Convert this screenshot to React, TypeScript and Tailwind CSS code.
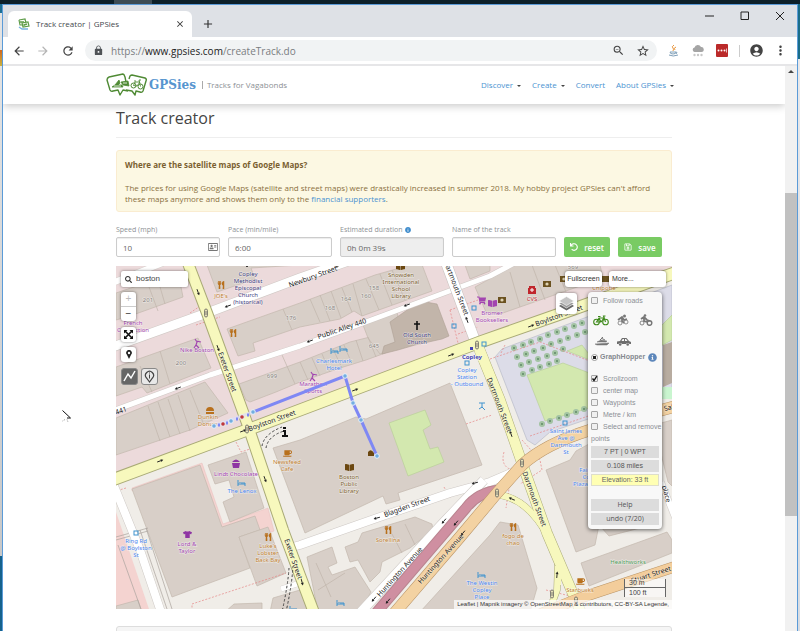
import React from "react";
import {
  MdArrowBack,
  MdArrowForward,
  MdRefresh,
  MdLock,
  MdZoomOut,
  MdStarBorder,
  MdAccountCircle,
  MdMoreVert,
  MdClose,
  MdAdd,
} from "react-icons/md";
import {
  FaInfoCircle,
  FaUndo,
  FaRegSave,
  FaSearch,
  FaUtensils,
  FaTshirt,
  FaCoffee,
  FaShoppingCart,
  FaBookOpen,
  FaRegAddressCard,
} from "react-icons/fa";

const ORANGE = "#c0802f";
const NAVY = "#40407f";
const BROWN = "#7d6230";
const PURPLE = "#a245b0";
const BLUE = "#4a84ee";
const GREY = "#85807a";

function Label({
  x,
  y,
  lines,
  color,
  size = 6,
  bold = false,
}: {
  x: number;
  y: number;
  lines: string[];
  color: string;
  size?: number;
  bold?: boolean;
}) {
  return (
    <g
      fill={color}
      fontSize={size}
      textAnchor="middle"
      fontWeight={bold ? 700 : 400}
      stroke="#ffffff"
      strokeOpacity={0.55}
      strokeWidth={1}
      paintOrder="stroke"
    >
      {lines.map((line, i) => (
        <text key={line} x={x} y={y + i * 7}>
          {line}
        </text>
      ))}
    </g>
  );
}

function Street({ x, y, r, children }: { x: number; y: number; r: number; children: string }) {
  return (
    <text
      transform={`translate(${x} ${y}) rotate(${r})`}
      y={2}
      fontSize={7}
      textAnchor="middle"
      fill="#222"
      stroke="#fff"
      strokeOpacity={0.4}
      strokeWidth={1}
      paintOrder="stroke"
    >
      {children}
    </text>
  );
}

function Road({ d, color, casing, width }: { d: string; color: string; casing: string; width: number }) {
  return (
    <g fill="none" strokeLinejoin="round">
      <path d={d} stroke={casing} strokeWidth={width + 1} />
      <path d={d} stroke={color} strokeWidth={width} />
    </g>
  );
}

function Bed({ x, y }: { x: number; y: number }) {
  return (
    <path
      d={`M${x},${y} v6 M${x},${y + 4} h7 M${x + 7},${y + 6} v-3 h-4 M${x + 2},${y + 2} v1`}
      fill="none"
      stroke="#3f93cf"
      strokeWidth="1"
    />
  );
}

const arrows = [
  [198, 292, 70], [218, 348, 70], [228, 306, 160], [178, 388, 160], [160, 461, -20], [243, 431, -20],
  [265, 479, 70], [338, 266, 160], [407, 305, 160], [310, 341, 160], [467, 320, -110], [451, 355, -20],
  [355, 390, -20], [531, 326, -20], [511, 434, -110], [512, 499, 205], [557, 575, -85], [377, 518, 165],
  [475, 483, 165], [444, 521, 130], [456, 523, 130], [463, 533, 130], [374, 599, 130], [388, 601, 130],
  [302, 582, 75],
];

const trees = [
  [514, 348], [523, 345], [531, 342], [540, 339], [548, 335], [557, 332], [565, 329], [574, 326], [582, 323],
  [517, 357], [526, 354], [534, 351], [543, 348], [551, 344], [560, 341], [568, 338], [577, 335], [585, 332],
  [521, 365], [529, 362], [538, 359], [547, 356], [555, 353], [563, 349],
  [523, 374], [532, 370], [540, 367], [549, 364], [557, 361],
  [542, 424], [550, 421], [559, 418], [567, 415], [576, 412], [584, 409],
];

const buildings = [
  "116,293 178,272 183,297 130,316 116,320",
  "207,265 217,292 255,279 251,268 300,265",
  "227,329 238,356 255,351 253,343 300,327 340,319 354,311 362,316 432,291 421,262 375,275 300,303",
  "116,367 198,338 211,368 147,393 142,387 116,396",
  "239,384 300,362 350,342 378,335 388,352 366,360 340,368 300,382 276,392 250,402 246,400",
  "116,418 205,382 228,413 190,430 116,455",
  "363,325 397,312 404,345 380,354 368,338",
  "465,265 490,265 490,271 470,279",
  "475,287 515,265 600,265 603,278 500,314 486,312",
  "273,448 300,440 356,417 366,419 450,383 482,465 398,493 400,500 386,504 383,496 305,533",
  "208,465 246,452 264,508 230,522 223,502 234,497 229,480 215,484",
  "132,489 200,465 222,527 255,516 260,530 239,537 250,568 172,597",
  "239,537 268,527 286,573 257,586",
  "116,606 138,600 142,612 116,612",
  "307,557 332,547 337,563 328,567 332,575 355,567 371,592 360,612 318,612",
  "345,547 358,542 362,533 415,517 432,524 433,530 410,548 382,562 380,572 370,582 358,560 350,562",
  "420,612 490,535 500,522 518,525 537,588 530,612",
  "546,470 570,460 576,451 600,438 600,520 595,545 576,552",
  "581,563 667,532 672,540 672,553 589,586",
  "600,526 640,520 648,526 609,536",
  "654,425 672,420 672,486 668,482",
  "234,604 262,603 262,612 225,612",
  "273,598 300,590 312,612 270,612",
];

const walls =
  "M158,280 165,304 M149,287 158,311 M140,366 152,392 M160,351 170,384 M148,406 160,441 M158,402 170,437 M168,399 180,434 M178,395 190,431 M190,390 204,425 M283,309 292,330 M310,299 320,322 M320,295 330,321 M331,291 341,318 M342,288 352,312 M353,284 362,316 M366,279 379,310 M380,274 392,305 M392,270 405,300 M300,362 308,380 M312,358 320,376 M322,354 330,372 M333,349 342,368 M344,345 352,364 M356,340 363,361 M368,337 376,357 M510,272 520,307 M532,265 545,300 M555,265 566,292 M282,355 295,384 M316,563 331,597 M392,534 402,553 M405,524 415,545 M318,590 345,573";

function StreetMap() {
  return (
    <svg
      className="block h-full w-full"
      viewBox="116 266 556 343"
      preserveAspectRatio="xMidYMid slice"
      fontFamily="'Noto Sans','Open Sans',sans-serif"
      role="img"
      aria-label="Map of Back Bay, Boston"
    >
      <rect x="100" y="250" width="600" height="380" fill="#f0ede8" />
      <polygon points="116,250 672,250 672,274 480,342 116,478" fill="#ecdadb" />
      <polygon points="495,357 502,349 672,285 672,395 600,415 550,432 535,445 527,440" fill="#dcdce8" stroke="#b9bbc8" strokeWidth="0.7" />
      <polygon points="116,512 150,612 116,612" fill="#f4d3d0" />
      <path d="M132,488 L202,463 223,524 268,508 274,531 262,536 255,518 221,529 199,467 132,491z" fill="#f4d3d0" stroke="#e5b8b5" strokeWidth="0.4" />
      <g fill="#d8cfc8" stroke="#c3b8ad" strokeWidth="0.7">
        {buildings.map((points) => (
          <polygon key={points} points={points} />
        ))}
      </g>
      <path d={walls} fill="none" stroke="#c0b5aa" strokeWidth="0.7" />
      <polygon points="390,322 420,301 437,304 449,336 442,339 415,345 398,350 382,354 384,346 395,342" fill="#c2b5aa" stroke="#ac9f93" strokeWidth="0.6" />
      <polygon points="663,345 672,342 672,383 663,387" fill="#b8aca0" />
      <g fill="#d3e8af" stroke="#b5cd94" strokeWidth="0.6">
        <polygon points="389,423 425,410 431,425 423,430 430,449 438,447 444,462 408,476" />
        <polygon points="527,375 563,363 600,377 600,405 545,421" />
        <polygon points="567,351 582,345 595,362" />
        <polygon points="657,330 672,315 672,340 657,348" />
      </g>
      <rect x="655" y="387" width="17" height="12" fill="#c9f5cf" />
      {trees.map(([x, y]) => (
        <g key={`${x}-${y}`}>
          <circle cx={x} cy={y} r="3" fill="#a3c3a3" />
          <circle cx={x} cy={y} r="1" fill="#5f8a66" />
        </g>
      ))}

      <path d="M116,537 L148,528 M116,540 L148,531 M140,530 167,609 M146,528 172,609 M118,545 142,612" stroke="#aaa49e" strokeWidth="0.7" fill="none" />
      <g fill="none" stroke="#e58585" strokeWidth="0.7" strokeDasharray="2 1.5">
        <path d="M450,310 458,343 M450,310 478,300 M458,334 478,327 M490,359 540,342 600,365 M192,611 192,604 286,573 M466,424 492,415 M236,442 241,452 250,449 M126,488 116,491 M504,452 Q500,466 512,470 L506,508 M522,440 540,460 542,470 520,484 M546,590 570,596 M190,313 203,304 M196,325 220,317 M505,345 501,353" />
        <path d="M530,436 600,412 M444,487 450,498" />
      </g>

      <Road d="M110,284 L165,262" color="#fff" casing="#d5cfcb" width={6} />
      <Road d="M110,348 L207,313 300,278 360,257" color="#fff" casing="#cfc8c4" width={9} />
      <Road d="M110,412 L210,375 300,346 363,323 490,276 520,260" color="#fff" casing="#cfc8c4" width={5} />
      <Road d="M445,260 L477,346" color="#fff" casing="#c5c0bc" width={10} />
      <Road d="M114,486 L140,550 162,615" color="#fff" casing="#cfcac6" width={8} />
      <Road d="M285,549 L300,545 377,518 450,493 490,482 520,469" color="#fff" casing="#cfcac6" width={8} />
      <Road d="M281,589 L300,583" color="#fff" casing="#cfcac6" width={5} />
      <Road d="M358,615 L443,523 484,480" color="#fff" casing="#cfcac6" width={9} />
      <Road d="M661,482 L678,525" color="#fff" casing="#cfcac6" width={6} />
      <path d="M376,613 L466,508 Q478,492 500,490" fill="none" stroke="#b9848f" strokeWidth="11" />
      <path d="M376,613 L466,508 Q478,492 500,490" fill="none" stroke="#cf8fa1" strokeWidth="9" />
      <Road d="M548,614 L557,590 558,562" color="#f7f8bd" casing="#a9aa76" width={6} />
      <Road d="M500,495 Q530,500 550,540" color="#f7f8bd" casing="#a9aa76" width={6} />
      <Road d="M478,346 L500,400 522,463 547,533 582,615" color="#f7f8bd" casing="#a9aa76" width={10} />
      <path d="M500,495 Q530,500 550,540 M558,585 V566" fill="none" stroke="#f7f8bd" strokeWidth="6" />
      <path d="M186,258 L207,313 247,423 283,530 316,618" fill="none" stroke="#a9aa76" strokeWidth="12" />
      <path d="M104,483 L247,430 300,410 480,342 557,315 680,271" fill="none" stroke="#a9aa76" strokeWidth="13" />
      <path d="M186,258 L207,313 247,423 283,530 316,618" fill="none" stroke="#f7f8bd" strokeWidth="10" />
      <path d="M104,483 L247,430 300,410 480,342 557,315 680,271" fill="none" stroke="#f7f8bd" strokeWidth="11" />
      <path d="M478,346 L484,361" stroke="#f7f8bd" strokeWidth="10" />
      <Road d="M540,614 L580,598 680,565" color="#f3cd9b" casing="#b89365" width={10} />
      <Road d="M392,616 L460,537 497,493 522,465 Q545,444 590,430 L680,405" color="#f3d2a2" casing="#b89365" width={11} />

      <g fill="none" stroke="#444" strokeWidth="1" strokeDasharray="2.5 2">
        <path d="M262,446 Q264,434 282,427 M266,448 Q268,436 284,431" />
        <path d="M293,566 Q292,585 286,612 M289,568 Q288,585 282,612" />
      </g>

      <g stroke="#222" strokeWidth="0.9" fill="#222">
        {arrows.map(([x, y, r]) => (
          <g key={`${x}-${y}`} transform={`translate(${x} ${y}) rotate(${r})`}>
            <path d="M-3,0 H1" />
            <path d="M1,-1.5 L3.5,0 L1,1.5z" stroke="none" />
          </g>
        ))}
      </g>
      <g fill="#e6e0b8" stroke="#555" strokeWidth="0.7">
        {[[206, 313], [247, 429], [477, 345], [522, 463], [497, 493], [552, 594], [576, 601]].map(([x, y]) => (
          <g key={`${x}-${y}`}>
            <rect x={x - 1.5} y={y - 4} width="3" height="8" rx="1.5" />
            <path d={`M${x - 1},${y - 1} h2 M${x - 1},${y + 1} h2`} />
          </g>
        ))}
      </g>

      <Street x={313} y={277} r={-20}>Newbury Street</Street>
      <Street x={342} y={329} r={-19}>Public Alley 440</Street>
      <Street x={227} y={372} r={70}>Exeter Street</Street>
      <Street x={293} y={559} r={71}>Exeter Street</Street>
      <Street x={272} y={421} r={-20}>Boylston Street</Street>
      <Street x={559} y={316} r={-20}>Boylston Street</Street>
      <Street x={456} y={288} r={69}>Dartmouth Street</Street>
      <Street x={499} y={405} r={69}>Dartmouth Street</Street>
      <Street x={534} y={499} r={70}>Dartmouth Street</Street>
      <Street x={407} y={507} r={-20}>Blagden Street</Street>
      <Street x={400} y={572} r={-48}>Huntington Avenue</Street>
      <Street x={441} y={559} r={-48}>Huntington Avenue</Street>
      <Street x={651} y={575} r={-18}>Stuart Street</Street>
      <Street x={121} y={411} r={-18}>441</Street>
      <Street x={666} y={494} r={75}>place</Street>
      <Street x={672} y={407} r={-16}>Saint</Street>

      <Label x={148} y={302} lines={["201"]} color={GREY} />
      <Label x={291} y={320} lines={["176"]} color={GREY} />
      <Label x={181} y={365} lines={["200"]} color={GREY} />
      <Label x={272} y={378} lines={["699"]} color={GREY} />
      <Label x={330} y={310} lines={["168"]} color={GREY} />
      <Label x={346} y={301} lines={["164"]} color={GREY} />
      <Label x={366} y={298} lines={["160"]} color={GREY} />
      <Label x={374} y={290} lines={["158"]} color={GREY} />
      <Label x={374} y={348} lines={["645"]} color={GREY} />
      <Label x={573} y={269} lines={["569"]} color={GREY} />

      <Label x={221} y={298} lines={["JOE's"]} color={ORANGE} />
      <Label x={248} y={276} lines={["Copley", "Methodist", "Episcopal", "Church", "(historical)"]} color={NAVY} />
      <Label x={133} y={325} lines={["French", "Connection"]} color={PURPLE} />
      <Label x={197} y={352} lines={["Nike Boston"]} color={PURPLE} />
      <Label x={208} y={419} lines={["Dunkin", "Donuts"]} color={ORANGE} />
      <Label x={401} y={277} lines={["Snowden", "International", "School", "Library"]} color={BROWN} />
      <Label x={334} y={363} lines={["Charlesmark", "Hotel"]} color={BLUE} />
      <Label x={313} y={386} lines={["Marathon", "Sports"]} color={PURPLE} />
      <Label x={417} y={337} lines={["Old South", "Church"]} color={NAVY} />
      <Label x={472} y={359} lines={["Copley"]} color="#4545b5" bold />
      <Label x={467} y={372} lines={["Copley", "Station", "- Outbound"]} color={BLUE} />
      <Label x={492} y={315} lines={["Bromer", "Booksellers"]} color={PURPLE} />
      <Label x={532} y={301} lines={["CVS"]} color="#c0262c" />
      <Label x={604} y={290} lines={["Chipotle"]} color={ORANGE} />
      <Label x={287} y={464} lines={["Newsfeed", "Cafe"]} color={ORANGE} />
      <Label x={236} y={476} lines={["Lindt Chocolate"]} color={PURPLE} />
      <Label x={242} y={493} lines={["The Lenox"]} color={BLUE} />
      <Label x={187} y={546} lines={["Lord &", "Taylor"]} color={PURPLE} />
      <Label x={136} y={543} lines={["Ring Rd", "@ Boylston", "St"]} color={BLUE} />
      <Label x={268} y={548} lines={["Luke's", "Lobster", "Back Bay"]} color={ORANGE} />
      <Label x={349} y={479} lines={["Boston", "Public", "Library"]} color={BROWN} />
      <Label x={388} y={542} lines={["Sorellina"]} color={ORANGE} />
      <Label x={482} y={585} lines={["The Westin", "Copley", "Place"]} color={BLUE} />
      <Label x={513} y={538} lines={["fogo de", "chao"]} color={ORANGE} />
      <Label x={566} y={433} lines={["Saint James", "Ave @", "Dartmouth", "St"]} color={BLUE} />
      <Label x={592} y={472} lines={["Fairmont", "Copley", "Plaza, Boston"]} color={BLUE} />
      <Label x={628} y={564} lines={["Healthworks"]} color="#4f9a58" />
      <Label x={580} y={592} lines={["Starbucks"]} color={ORANGE} />

      <FaUtensils x={217} y={281} size={8} color="#b8701c" />
      <FaUtensils x={229} y={329} size={8} color="#b8701c" />
      <FaUtensils x={264} y={533} size={8} color="#b8701c" />
      <FaUtensils x={384} y={526} size={8} color="#b8701c" />
      <FaUtensils x={509} y={523} size={8} color="#b8701c" />
      <FaCoffee x={283} y={449} size={9} color="#b8701c" />
      <FaCoffee x={576} y={577} size={9} color="#b8701c" />
      <FaTshirt x={183} y={530} size={9} color="#8f35a3" />
      <FaShoppingCart x={477} y={296} size={9} color="#a245b0" />
      <FaBookOpen x={488} y={299} size={9} color="#a245b0" />
      <FaBookOpen x={345} y={463} size={9} color="#6b4710" />
      <FaBookOpen x={396} y={262} size={9} color="#6b4710" />
      <Bed x={331} y={348} />
      <Bed x={340} y={346} />
      <Bed x={238} y={480} />
      <Bed x={337} y={600} />
      <Bed x={478} y={572} />
      <Bed x={290} y={606} />
      <path d="M206,411 q0,-4 4,-4 q4,0 4,4z M206,412 h8 v2 h-8z" fill="#b8701c" />
      <path d="M232,463 h8 l-1,5 h-6z M232,462 q4,-5 8,0z" fill="#8f35a3" />
      <g stroke="#a245b0" strokeWidth="1.2" fill="none">
        <path d="M195,339 l2,3 -1,3 3,3 M196,341 l5,1 M196,345 l-2,3" />
        <path d="M311,372 l2,3 -1,3 3,3 M312,374 l5,1 M312,378 l-2,3" />
      </g>
      <path d="M417,321 v9 M414,324 h6 M247,262 v5" stroke="#111" strokeWidth="1.6" />
      <path d="M529,286 h6 v2 h1 v6 h-8 v-6 h1z" fill="#c0262c" />
      <path d="M532,288 v4 M530,290 h4" stroke="#fff" />
      <g fill="#6b5220">
        <path d="M498,297 h8 v6 h-8z M543,281 h8 v6 h-8z M560,276 h8 v6 h-8z M602,276 h8 v6 h-8z" />
        <g fill="#e0d4b4">
          <circle cx="502" cy="300" r="1.6" /><circle cx="547" cy="284" r="1.6" /><circle cx="564" cy="279" r="1.6" />
        </g>
      </g>
      <path d="M283,430 h3 v5 h2 v2 h-6 v-2 h2 v-3 h-1z M283,427 h3 v2 h-3z" fill="#111" />
      <path d="M374,456 v-3 q-3,-5 -6,-1 v4z" fill="#6b4710" />
      <rect x="470" y="347" width="3" height="3" fill="#4545b5" />
      <g fill="none" stroke="#3f93cf" strokeWidth="1">
        <rect x="452" y="324" width="4" height="4" />
        <rect x="472" y="306" width="4" height="4" />
        <rect x="482" y="342" width="4" height="4" />
        <rect x="465" y="361" width="4" height="4" />
        <rect x="563" y="421" width="4" height="4" />
        <rect x="134" y="531" width="4" height="4" />
        <path d="M479,403 h6 M482,403 v5 M479,409 l3,-2 3,3" />
      </g>

      <path d="M214,426 L253,412" stroke="#dcdcfb" strokeWidth="3" strokeOpacity="0.7" />
      <path d="M253,412 L345,376 353,403 361,420 377,456" fill="none" stroke="#7f88f4" strokeWidth="3" />
      {[
        [214, 426, "#73aee0"], [223, 424, "#c0383c"], [231, 421, "#73aee0"], [242, 417, "#c0383c"], [253, 412, "#73aee0"],
        [345, 376, "#73aee0"], [353, 403, "#73aee0"], [361, 420, "#73aee0"], [377, 456, "#73aee0"],
      ].map(([x, y, c]) => (
        <circle key={`${x}-${y}`} cx={x} cy={y} r="2.3" fill={String(c)} stroke="#e8f1fa" strokeWidth="1" />
      ))}
      <path d="M218,425 h2 M226,423 h2 M236,419 h2 M247,415 h2" stroke="#7f88f4" strokeWidth="3" />
    </svg>
  );
}

function Caret() {
  return <span className="ml-1 inline-block border-x-2 border-t-2 border-x-transparent border-t-[#444] align-middle" />;
}

function Logo() {
  return (
    <svg className="h-[24px] w-[42px]" viewBox="0 0 42 24" fill="none" stroke="#4f8a34" aria-hidden="true">
      <path d="M3,4 L17,1 Q18,1 19,4 L20,9 M3,4 Q1,5 1,7 L4,17 Q5,19 7,18 L12,17 14,22 17,17 22,18" strokeWidth="1.4" strokeLinejoin="round" />
      <path d="M23,6 L24,3 Q25,2 26,2 L39,5 Q41,6 40,8 L37,18 Q36,20 34,19 L30,18 29,22 26,18 20,17" strokeWidth="1.4" strokeLinejoin="round" />
      <path d="M6,14 L9,12 13,7 14,10 12,12 16,12 17,14z M15,9 L22,8 23,13 17,12z" fill="#4f8a34" strokeWidth="0.8" />
      <path d="M8,13 L15,13 M17,10 H21" stroke="#fff" strokeWidth="0.8" />
      <circle cx="27.500" cy="12.500" r="2.500" />
      <circle cx="34.500" cy="13.500" r="2.500" />
      <path d="M27.500,12.500 L29,9 34,9 31,13z M34.500,13.500 L33,7 35,7 M28,8 h2" strokeWidth="0.9" />
    </svg>
  );
}

function Check({ label, checked = false }: { label: string; checked?: boolean }) {
  return (
    <label className="relative block text-[7px] leading-3">
      <input
        type="checkbox"
        defaultChecked={checked}
        className="peer mr-[5px] inline-block size-[7px] appearance-none rounded-[1px] border border-[#a5a5a5] bg-[#f0f0f0] align-[-1px]"
      />
      <svg
        className="pointer-events-none absolute left-0 top-[2px] hidden size-[7px] peer-checked:block"
        viewBox="0 0 7 7"
        fill="none"
        stroke="#111"
        strokeWidth="1.300"
        aria-hidden="true"
      >
        <path d="M1.500,3.500 L3,5.500 5.800,1.200" />
      </svg>
      {label}
    </label>
  );
}

function Bike({ className }: { className: string }) {
  return (
    <svg className={className} viewBox="0 0 16 11" fill="none" stroke="currentColor" strokeWidth="1.1" aria-hidden="true">
      <circle cx="3.500" cy="7" r="2.800" />
      <circle cx="12.500" cy="7" r="2.800" />
      <path d="M3.500,7 L6,3 H11 L8,7z M12.500,7 L10.500,1 H12.500 M5,1.500 H7.500 M6,3 L8,7" />
    </svg>
  );
}

const panelButton = "h-3 w-full bg-[#dcdcdc] text-center text-[7px] leading-3 text-[#555]";
const mapButton = "flex items-center justify-center rounded-[3px] bg-white text-[#333] shadow-[0_0_3px_rgba(0,0,0,0.5)]";

function MapPanel() {
  return (
    <aside className="absolute right-[10px] top-[26px] w-[74px] rounded-[4px] bg-[#f8f8f8] pb-1 pl-[3px] pt-[3px] font-['Liberation_Sans',Arial,sans-serif] text-[#8b8f95] shadow-[0_1px_4px_rgba(0,0,0,0.6)]">
      <Check label="Follow roads" />
      <div className="mt-[7px] flex items-center gap-[7px] pl-[2px]">
        <Bike className="h-[11px] w-4 text-[#3f8a1c]" />
        <svg className="h-3 w-[14px]" viewBox="0 0 14 12" fill="none" stroke="#777" aria-hidden="true">
          <circle cx="4" cy="9" r="2" strokeWidth="0.800" /><circle cx="10" cy="8" r="2" strokeWidth="0.800" />
          <path d="M2,6 L6,3 8,6 11,5 M6,4 L6,7 8,9" strokeWidth="1.800" />
          <circle cx="8.500" cy="2" r="1.500" fill="#777" stroke="none" />
        </svg>
        <svg className="ml-[2px] h-3 w-[14px]" viewBox="0 0 14 12" fill="none" stroke="#777" aria-hidden="true">
          <circle cx="3" cy="9" r="2" strokeWidth="0.900" /><circle cx="10.500" cy="9" r="2.300" strokeWidth="1.500" />
          <path d="M2,5 L5,3 8,6 11,7 M5,3 L5,7 8,8" strokeWidth="1.800" />
          <circle cx="6" cy="1.500" r="1.300" fill="#777" stroke="none" />
        </svg>
      </div>
      <div className="mt-[10px] flex items-center gap-2 pl-[4px]">
        <svg className="h-[10px] w-[14px]" viewBox="0 0 14 10" fill="#777" stroke="#777" aria-hidden="true">
          <path d="M0,8 L14,7 12,9 2,9z M2,6 L6,4 12,5 11,6z" strokeWidth="0.500" />
          <path d="M5,4 L8,1 M6,2 L10,4" strokeWidth="1" />
        </svg>
        <svg className="h-[9px] w-[14px]" viewBox="0 0 14 9" fill="#6d6d6d" aria-hidden="true">
          <path d="M0,7 V4.500 L3,4 5,1 H9.500 L12,4 14,5 V7 H12.500 A2,2 0 0 0 9,7 H5 A2,2 0 0 0 1.500,7z" />
          <path d="M4.500,4 L5.700,2 H7 V4z M8,2 H9 L10.500,4 H8z" fill="#f8f8f8" />
          <circle cx="3.200" cy="7.500" r="1.300" /><circle cx="10.700" cy="7.500" r="1.300" />
        </svg>
      </div>
      <label className="mt-[5px] flex h-3 items-center text-[7px] font-bold leading-3 text-[#85898f]">
        <input
          type="radio"
          name="router"
          defaultChecked
          className="mr-[2px] size-[7px] appearance-none rounded-full border border-[#999] bg-white checked:bg-[radial-gradient(#222_40%,transparent_50%)]"
        />
        GraphHopper
        <FaInfoCircle className="ml-[3px] size-[9px] text-[#5d87bb]" />
      </label>
      <div className="mt-[10px]">
        <Check label="Scrollzoom" checked />
        <Check label="center map" />
        <Check label="Waypoints" />
        <Check label="Metre / km" />
        <Check label="Select and remove points" />
      </div>
      <div className="mt-px flex flex-col gap-[2px] pr-[3px]">
        <div className={panelButton}>7 PT | 0 WPT</div>
        <div className={panelButton}>0.108 miles</div>
        <div className="h-3 w-full border border-[#dedecb] bg-[#ffffb3] text-center text-[7px] leading-[10px] text-[#666]">Elevation: 33 ft</div>
      </div>
      <div className="mt-[13px] flex flex-col gap-[2px] pr-[3px] font-['Open_Sans',sans-serif]">
        <button className={panelButton}>Help</button>
        <button className={panelButton}>undo (7/20)</button>
      </div>
    </aside>
  );
}

function MapView() {
  return (
    <section className="relative mt-[9px] h-[343px] overflow-hidden font-['Liberation_Sans',Arial,sans-serif]">
      <StreetMap />
      <div className="absolute left-[5px] top-[5px] flex flex-col items-start">
        <label className="flex h-4 w-[67px] items-center rounded-[2px] bg-white px-1 shadow-[0_0_3px_rgba(0,0,0,0.5)]">
          <FaSearch className="size-[7px] shrink-0 text-[#333]" aria-label="Search" />
          <input className="ml-1 w-full min-w-0 bg-transparent text-[8px] text-[#444] outline-none" defaultValue="boston" />
        </label>
        <div className="mt-[5px] w-[15px] rounded-[3px] bg-white text-center text-[10px] leading-[14px] text-[#333] shadow-[0_0_3px_rgba(0,0,0,0.5)]">
          <button className="block h-[15px] w-full border-b border-[#ccc] text-[#bbb]">+</button>
          <button className="block h-[14px] w-full">−</button>
        </div>
        <button className={`mt-[6px] size-[15px] ${mapButton}`} aria-label="Expand">
          <svg className="size-[9px]" viewBox="0 0 9 9" fill="#111" aria-hidden="true">
            <path d="M0,0 H3.500 L0,3.500z M9,0 V3.500 L5.500,0z M0,9 V5.500 L3.500,9z M9,9 H5.500 L9,5.500z" />
            <path d="M1,1 L8,8 M8,1 L1,8" stroke="#111" strokeWidth="1.600" />
          </svg>
        </button>
        <button className={`mt-[5px] size-[15px] ${mapButton}`} aria-label="Locate">
          <svg className="h-[9px] w-[6px]" viewBox="0 0 6 9" aria-hidden="true">
            <path d="M3,9 L0.800,4.500 A2.800,2.800 0 1 1 5.200,4.500z" fill="#222" />
            <circle cx="3" cy="3" r="1.200" fill="#fff" />
          </svg>
        </button>
        <div className="mt-[6px] flex gap-[3px]">
          <button className="flex size-[17px] items-center justify-center rounded-[3px] border border-[#888] bg-[#666]" aria-label="Draw track">
            <svg className="size-[13px]" viewBox="0 0 13 13" fill="none" stroke="#fff" strokeWidth="1.500" aria-hidden="true">
              <path d="M1,11 L5,4 8,8 12,1" />
            </svg>
          </button>
          <button className="flex size-[17px] items-center justify-center rounded-[3px] border border-[#888] bg-[#e8e8e8]" aria-label="Add waypoint">
            <svg className="size-[13px]" viewBox="0 0 13 13" fill="none" stroke="#444" aria-hidden="true">
              <path d="M6.500,12 L3.500,8 A4,4 0 1 1 9.500,8z" strokeWidth="1.200" />
              <path d="M6.500,4.500 v4 M6.500,2.500 v1" />
            </svg>
          </button>
        </div>
      </div>

      <div className="absolute right-[6px] top-[5px] flex gap-[7px]">
        <button className={`h-4 w-[37px] text-[7px] ${mapButton}`}>Fullscreen</button>
        <button className="h-4 w-[57px] rounded-[3px] bg-white pl-[3px] text-left text-[7px] text-[#333] shadow-[0_0_3px_rgba(0,0,0,0.5)]">More...</button>
      </div>
      <button className={`absolute right-[95px] top-[27px] size-[21px] ${mapButton}`} aria-label="Layers">
        <svg className="h-[15px] w-[17px]" viewBox="0 0 17 15" aria-hidden="true">
          <path d="M8.500,5 L16,10 8.500,14.500 1,10z" fill="#666" />
          <path d="M8.500,3 L16,7.500 8.500,12 1,7.500z" fill="#999" stroke="#fff" strokeWidth="0.600" />
          <path d="M8.500,0.500 L16,5 8.500,9.500 1,5z" fill="#c4c4c4" stroke="#fff" strokeWidth="0.600" />
        </svg>
      </button>
      <MapPanel />

      <div className="absolute bottom-[12px] right-[6px] w-[42px] text-[7px] leading-[9px] text-[#444]">
        <div className="border-x border-b border-[#666] bg-white/50 px-1 leading-[8px]">30 m</div>
        <div className="border-x border-[#666] bg-white/50 px-1">100 ft</div>
      </div>
      <p className="absolute bottom-0 right-0 bg-white/70 px-[3px] text-[6px] leading-[9px] text-[#333]">
        <a href="#leaflet">Leaflet</a> | Mapnik imagery © <a href="#osm">OpenStreetMap &amp; contributors, CC-BY-SA Legende,</a>
      </p>
    </section>
  );
}

const field =
  "h-5 w-full rounded-[2px] border border-[#ccc] bg-white px-[6px] text-[8px] text-[#666] shadow-[inset_0_1px_1px_rgba(0,0,0,0.08)] outline-none read-only:bg-[#eee]";
const green = "flex h-5 items-center justify-center gap-[6px] rounded-[2px] bg-[#79cb63] text-[8px] font-semibold text-white";

function BrowserChrome() {
  return (
    <header>
      <div className="flex h-8 items-start bg-[#dee1e6]">
        <div className="ml-[5px] mt-[6px] flex h-[26px] w-[184px] items-center rounded-t-[6px] bg-white pl-[10px] pr-[7px]">
          <svg className="size-3" viewBox="0 0 12 12" fill="none" stroke="#5d9c48" aria-hidden="true">
            <path d="M1,2 L7,1 8,5 M1,2 L2,7 7,7 M4,5 L10,4 11,8 5,9z" strokeWidth="1.200" />
            <path d="M2,4 L6,4 M6,7 L9,6" strokeWidth="1.500" />
            <path d="M1,9 L4,11 10,11" stroke="#77b3df" strokeWidth="1.500" />
          </svg>
          <span className="ml-[6px] text-[8px] text-[#45484c]">Track creator | GPSies</span>
          <button className="ml-auto" aria-label="Close tab"><MdClose className="size-[10px] text-[#333]" /></button>
        </div>
        <button className="ml-[9px] mt-3" aria-label="New tab"><MdAdd className="size-[14px] text-[#333]" /></button>
        <div className="ml-auto mr-[12px] mt-[5px] flex gap-[24px] text-[#222]">
          {[
            ["Minimize", "M1,6 H10"],
            ["Maximize", "M2,2 H9.500 V9.500 H2z"],
            ["Close", "M2,2 L10,10 M10,2 L2,10"],
          ].map(([name, d]) => (
            <button key={name} aria-label={name}>
              <svg className="size-[11px]" viewBox="0 0 11 11" fill="none" stroke="currentColor"><path d={d} /></svg>
            </button>
          ))}
        </div>
      </div>
      <div className="flex h-[29px] items-center border-b-2 border-[#e6e6e8] bg-white pl-[9px] pr-[9px] text-[#444]">
        <MdArrowBack className="size-[14px]" />
        <MdArrowForward className="ml-[10px] size-[14px] text-[#b5b5b5]" />
        <MdRefresh className="ml-[11px] size-[14px]" />
        <div className="ml-[10px] flex h-[21px] flex-1 items-center rounded-full bg-[#f1f3f4] pl-2 pr-[7px]">
          <MdLock className="size-[11px] shrink-0 text-[#4f5357]" />
          <p className="ml-[7px] flex-1 text-[10px] leading-4 text-[#7a7d81]">
            https://<span className="text-[#222]">www.gpsies.com</span>/createTrack.do
          </p>
          <MdZoomOut className="size-[13px] -scale-x-100 rotate-0 scale-x-100" />
          <MdStarBorder className="ml-[11px] size-[14px]" />
        </div>
        <svg className="ml-[10px] h-[13px] w-[13px]" viewBox="0 0 13 13" fill="none" aria-hidden="true">
          <path d="M7,1 Q4,3 6,4 Q7,5 6,7 M9,3 Q6,4 8,6" stroke="#e8963e" strokeWidth="1" />
          <path d="M3,8 H9 Q9,10 6,10 Q3,10 3,8 M9,8 Q11,8 9,10 M2,11 Q6,13 11,11" stroke="#7f9fb8" strokeWidth="1" />
        </svg>
        <svg className="ml-[12px] h-[13px] w-3" viewBox="0 0 12 13" fill="#a5a5a5" aria-hidden="true">
          <path d="M2.500,8 A2.300,2.300 0 0 1 2.500,3.500 A3.500,3.500 0 0 1 9,3 A2.500,2.500 0 0 1 9.500,8z" />
          <circle cx="2.500" cy="11" r="1.200" fill="#c8c8c8" /><circle cx="6" cy="11" r="1.200" fill="#c8c8c8" /><circle cx="9.500" cy="11" r="1.200" fill="#c8c8c8" />
        </svg>
        <svg className="ml-[12px] h-[13px] w-3" viewBox="0 0 12 13" aria-hidden="true">
          <rect width="12" height="13" rx="1" fill="#bb2a2a" />
          <circle cx="2.500" cy="6.500" r="1" fill="#fff" /><circle cx="5.500" cy="6.500" r="1" fill="#fff" /><circle cx="8.500" cy="6.500" r="1" fill="#fff" />
          <path d="M10.500,4.500 v4" stroke="#fff" strokeWidth="0.700" />
        </svg>
        <span className="ml-[11px] h-3 w-px bg-[#ccc]" />
        <MdAccountCircle className="ml-[9px] size-[15px]" />
        <MdMoreVert className="ml-[9px] size-[15px]" />
      </div>
    </header>
  );
}

export default function App() {
  return (
    <div className="flex h-screen flex-col overflow-hidden bg-[#0d2029] font-['Open_Sans','Noto_Sans',sans-serif]">
      <div className="flex h-1 shrink-0"><span className="ml-[114px] w-[38px] bg-[#3d4c54]" /></div>
      <div className="flex min-h-0 flex-1">
        <div className="w-[2px] bg-[linear-gradient(#1c6f94_9px,#e3e3e3_9px,#e3e3e3_46px,#d2691e_46px,#c9b23f_62px,#e3e3e3_62px,#c8c8c8_552px,#16628c_552px)]" />
        <div className="relative flex min-w-0 flex-1 flex-col border-x border-t border-[#5b9bd8] bg-white">
          <BrowserChrome />
          <div className="flex min-h-0 flex-1">
            <div className="flex min-w-0 flex-1 flex-col overflow-hidden">
              <div className="z-10 shrink-0 bg-white shadow-[0_2px_8px_rgba(0,0,0,0.22)]">
                <div className="mx-auto flex h-[38px] max-w-[576px] items-center pr-2">
                  <Logo />
                  <span className="ml-px font-['DejaVu_Serif',serif] text-[12px] font-bold text-[#5795cf]">GPSies</span>
                  <span className="ml-[6px] border-l border-[#aaa] pl-1 text-[8px] leading-[8px] text-[#8d9195]">Tracks for Vagabonds</span>
                  <nav className="ml-auto flex gap-[11px] text-[8px] text-[#4b93d1]">
                    <a href="#discover">Discover<Caret /></a>
                    <a href="#create">Create<Caret /></a>
                    <a href="#convert">Convert</a>
                    <a href="#about">About GPSies<Caret /></a>
                  </nav>
                </div>
              </div>
              <main className="mx-auto w-full max-w-[556px]">
                <h1 className="mt-[2px] border-b border-[#eee] pb-[7px] text-[16px] leading-6 text-[#444]">Track creator</h1>
                <div className="mt-3 rounded-[3px] border border-[#faecd0] bg-[#fcf8e3] px-2 pb-[7px] pt-2 text-[8px] leading-[11px] text-[#8a7041]">
                  <strong className="block text-[#7a6030]">Where are the satellite maps of Google Maps?</strong>
                  <p className="mt-3">
                    The prices for using Google Maps (satellite and street maps) were drastically increased in summer 2018. My hobby
                    project GPSies can't afford these maps anymore and shows them only to the{" "}
                    <a href="#supporters" className="text-[#4b93d1]">financial supporters</a>.
                  </p>
                </div>
                <form className="mt-3 grid grid-cols-[repeat(4,minmax(0,1fr))_108px] items-end gap-2 text-[7px] leading-[11px] text-[#8d9195]">
                  <div>
                    <label htmlFor="speed" className="mb-[2px] block">Speed (mph)</label>
                    <div className="relative">
                      <input id="speed" className={field} defaultValue="10" />
                      <FaRegAddressCard className="absolute right-[2px] top-[5px] size-[10px] text-[#777]" />
                    </div>
                  </div>
                  <div>
                    <label htmlFor="pace" className="mb-[2px] block">Pace (min/mile)</label>
                    <input id="pace" className={field} defaultValue="6:00" />
                  </div>
                  <div>
                    <label htmlFor="duration" className="mb-[2px] flex items-center">
                      Estimated duration <FaInfoCircle className="ml-[3px] size-[6px] text-[#3e8ccc]" />
                    </label>
                    <input id="duration" readOnly className={field} defaultValue="0h 0m 39s" />
                  </div>
                  <div>
                    <label htmlFor="name" className="mb-[2px] block">Name of the track</label>
                    <input id="name" className={field} />
                  </div>
                  <div className="flex gap-2">
                    <button type="button" className={`w-[46px] ${green}`}><FaUndo className="size-[8px]" />reset</button>
                    <button type="button" className={`w-[44px] ${green}`}><FaRegSave className="size-[8px]" />save</button>
                  </div>
                </form>
                <MapView />
                <div className="mt-[17px] h-10 rounded-[3px] border border-[#ddd] bg-[#f5f5f5]" />
              </main>
            </div>
            <div className="flex w-3 flex-col items-center bg-[#f1f1f1]">
              <span className="mt-1 border-x-[3px] border-b-[3px] border-x-transparent border-b-[#444]" />
              <div className="mt-[120px] h-[323px] w-full bg-[#c1c1c1]" />
            </div>
          </div>
          <svg className="absolute left-[59px] top-[405px] h-[15px] w-[10px]" viewBox="0 0 10 15" fill="none" aria-hidden="true">
            <path d="M0.500,0.500 L8.500,8 H5" stroke="#111" strokeWidth="1" />
            <path d="M3,9.500 L0.500,11 M5,9.500 L6,12" stroke="#999" strokeDasharray="1 1" />
          </svg>
        </div>
        <div className="w-[2px] bg-[linear-gradient(#1a6d88_55px,#e8e8ea_55px,#d8dce2_100%)]" />
      </div>
    </div>
  );
}
